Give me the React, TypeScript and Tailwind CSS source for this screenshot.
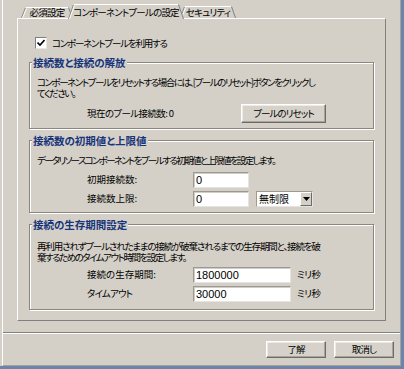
import React from "react";

function Tab({
  label,
  w,
  h,
  s,
  className,
}: {
  label: string;
  w: number;
  h: number;
  s: number;
  className: string;
}) {
  return (
    <div className={`relative shrink-0 flex justify-center ${className}`}>
      <svg className="absolute left-0 top-0" width={w} height={h} viewBox={`0 0 ${w} ${h}`}>
        <polygon
          points={`0.5,${h} ${s + 0.5},0.5 ${w - s - 0.5},0.5 ${w - 0.5},${h}`}
          fill="#d4d0c8"
        />
        <line x1={0.5} y1={h} x2={s + 0.5} y2={0.5} stroke="#8d8a83" strokeWidth={1} />
        <line x1={1.5} y1={h} x2={s + 1.5} y2={1.5} stroke="#ffffff" strokeWidth={1} />
        <line x1={s + 0.5} y1={0.5} x2={w - s - 0.5} y2={0.5} stroke="#ffffff" strokeWidth={1} />
        <line x1={w - s - 0.5} y1={0.5} x2={w - 0.5} y2={h} stroke="#808080" strokeWidth={1} />
      </svg>
      <span className="relative leading-[11px] whitespace-nowrap tracking-[-0.8px]">{label}</span>
    </div>
  );
}

function Btn({ label, className }: { label: string; className: string }) {
  return (
    <div
      className={`flex items-center justify-center bg-[#d6d2ca] border border-t-white border-l-white border-r-[#6b6b6b] border-b-[#6b6b6b] shadow-[inset_-1px_-1px_0_#a8a49c,inset_1px_1px_0_#ecebe6] leading-none whitespace-nowrap tracking-[-0.9px] ${className}`}
    >
      {label}
    </div>
  );
}

function Input({ value, className }: { value: string; className: string }) {
  return (
    <div
      className={`h-[16px] bg-white border border-[#9c9992] border-r-[#e6e4de] border-b-[#e6e4de] shadow-[inset_1px_1px_0_#d0cdc6] flex items-center pl-[2px] leading-none font-['Liberation_Sans',sans-serif] text-[11px] ${className}`}
    >
      {value}
    </div>
  );
}

function Group({
  title,
  children,
  className,
}: {
  title: string;
  children: React.ReactNode;
  className: string;
}) {
  return (
    <fieldset
      className={`w-[345px] border border-[#8a877f] shadow-[1px_1px_0_#fff,inset_1px_1px_0_#fff] ${className}`}
    >
      <legend className="ml-[2px] px-[1px] bg-[#d4d0c8] font-bold text-[#17357a] leading-[11px] text-[10.5px]">
        {title}
      </legend>
      {children}
    </fieldset>
  );
}

export default function App() {
  return (
    <div className="w-[404px] h-[369px] bg-[#d4d0c8] border-r-[3px] border-b-[3px] border-[#6b84ac] flex overflow-hidden font-['Noto_Sans_CJK_JP',sans-serif] text-[9.5px] text-black [font-feature-settings:'palt'_1]">
      <div className="ml-[2px] flex-1 flex flex-col border-l border-white border-r border-r-[#a6a39c] border-b border-b-[#a6a39c]">
        <div className="ml-[14px] w-[369px] flex flex-col">
          {/* tabs */}
          <div className="flex items-end h-[18px] pl-[4px]">
            <Tab label="必須設定" w={52} h={11} s={4} className="w-[52px] h-[11px] pt-0 z-0" />
            <Tab
              label="コンポーネントプールの設定"
              w={116}
              h={15}
              s={5}
              className="w-[116px] h-[15px] -ml-[5px] -mb-[1px] pt-[3px] z-20"
            />
            <Tab label="セキュリティ" w={56} h={12} s={4} className="w-[56px] h-[12px] -ml-[4px] pt-[1px] z-10" />
          </div>
          {/* panel */}
          <div className="h-[303px] border border-t-white border-l-white border-r-[#808080] border-b-[#808080] flex flex-col px-[11px]">
            <div className="mt-[17px] ml-[6px] h-[13px] flex items-center gap-[5px]">
              <div className="w-[12px] h-[12px] bg-white border border-[#7f7f7f] border-r-[#e8e6e0] border-b-[#e8e6e0] flex items-center justify-center">
                <svg width="8" height="8" viewBox="0 0 8 8">
                  <path d="M0.5 3.5 L3 6 L7.5 1" fill="none" stroke="#000" strokeWidth="1.6" />
                </svg>
              </div>
              <span className="leading-[12px] whitespace-nowrap tracking-[-1.2px]">コンポーネントプールを利用する</span>
            </div>

            <Group title="接続数と接続の解放" className="mt-[8px]">
              <div className="px-[7px] pt-[9px] pb-[5px]">
                <p className="leading-[11px] whitespace-nowrap tracking-[-1.45px]">
                  コンポーネントプールをリセットする場合には、[プールのリセット]ボタンをクリックし
                  <br />
                  てください。
                </p>
                <div className="mt-[5px] flex items-center h-[19px]">
                  <span className="ml-[50px] w-[154px] leading-none whitespace-nowrap tracking-[-0.6px]">現在のプール接続数: 0</span>
                  <Btn label="プールのリセット" className="w-[85px] h-[19px]" />
                </div>
              </div>
            </Group>

            <Group title="接続数の初期値と上限値" className="mt-[6px]">
              <div className="px-[7px] pt-[8px] pb-[5px]">
                <p className="leading-[12px] whitespace-nowrap tracking-[-1.7px]">
                  データリソースコンポーネントをプールする初期値と上限値を設定します。
                </p>
                <div className="mt-[6px] flex items-center">
                  <span className="ml-[50px] w-[106px] leading-none">初期接続数:</span>
                  <Input value="0" className="w-[56px]" />
                </div>
                <div className="mt-[3px] flex items-center">
                  <span className="ml-[50px] w-[106px] leading-none">接続数上限:</span>
                  <Input value="0" className="w-[56px]" />
                  <div className="ml-[7px] w-[57px] h-[16px] bg-white border border-[#9c9992] border-r-[#e6e4de] border-b-[#e6e4de] flex items-center justify-between">
                    <span className="pl-[2px] leading-none text-[10px]">無制限</span>
                    <div className="w-[12px] h-[14px] bg-[#d4d0c8] border border-t-white border-l-white border-r-[#6b6b6b] border-b-[#6b6b6b] flex items-center justify-center">
                      <svg width="7" height="4" viewBox="0 0 7 4">
                        <path d="M0 0 H7 L3.5 4 Z" fill="#000" />
                      </svg>
                    </div>
                  </div>
                </div>
              </div>
            </Group>

            <Group title="接続の生存期間設定" className="mt-[6px]">
              <div className="px-[7px] pt-[11px] pb-[7px]">
                <p className="leading-[11px] whitespace-nowrap">
                  <span className="tracking-[-1.15px]">再利用されずプールされたままの接続が破棄されるまでの生存期間と、接続を破</span>
                  <br />
                  <span className="tracking-[-1.5px]">棄するためのタイムアウト時間を設定します。</span>
                </p>
                <div className="mt-[4px] flex items-center">
                  <span className="ml-[50px] w-[106px] leading-none">接続の生存期間:</span>
                  <Input value="1800000" className="w-[98px]" />
                  <span className="ml-[6px] leading-none tracking-[-0.6px]">ミリ秒</span>
                </div>
                <div className="mt-[3px] flex items-center">
                  <span className="ml-[50px] w-[106px] leading-none tracking-[-0.8px]">タイムアウト</span>
                  <Input value="30000" className="w-[98px]" />
                  <span className="ml-[6px] leading-none tracking-[-0.6px]">ミリ秒</span>
                </div>
              </div>
            </Group>
          </div>
        </div>

        {/* separator */}
        <div className="mt-[11px] h-[2px] border-t border-t-[#808080] border-b border-b-white" />

        {/* buttons */}
        <div className="mt-[7px] flex justify-end gap-[8px] pr-[6px]">
          <Btn label="了解" className="w-[60px] h-[17px]" />
          <Btn label="取消し" className="w-[60px] h-[17px]" />
        </div>
      </div>
    </div>
  );
}
